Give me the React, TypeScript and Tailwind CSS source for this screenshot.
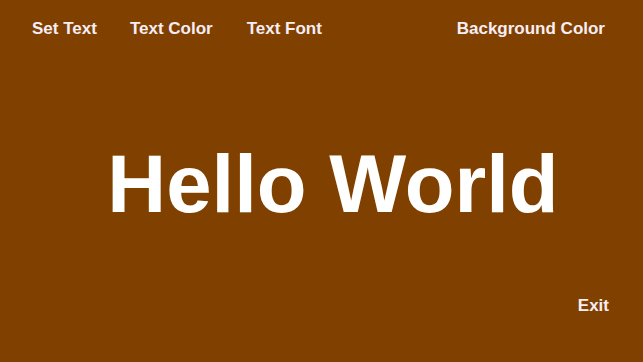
export default function App() {
  return (
    <main className="h-[362px] w-full bg-[#804000] flex flex-col font-['Liberation_Sans',Arial,sans-serif] font-bold select-none">
      <div className="flex items-center pt-[16px] pl-[32px] pr-[38px] text-[17px] text-[#f7eef5]">
        <button className="mr-[33px]">Set Text</button>
        <button className="mr-[34px]">Text Color</button>
        <button>Text Font</button>
        <button className="ml-auto">Background Color</button>
      </div>
      <div className="flex-1 flex items-center justify-center pl-[23px]">
        <h1 className="text-[81.5px] leading-none text-white mt-[33px]">Hello World</h1>
      </div>
      <div className="flex justify-end pr-[34px] pb-[44px] text-[17px] text-[#f7eef5]">
        <button>Exit</button>
      </div>
    </main>
  );
}
